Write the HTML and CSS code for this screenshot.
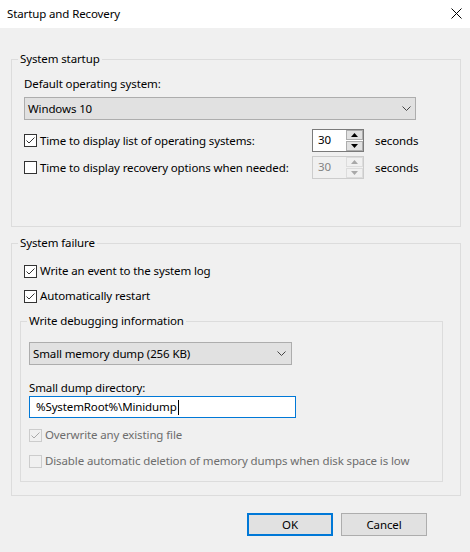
FILE: index.html
```html
<!DOCTYPE html>
<html>
<head>
<meta charset="utf-8">
<link rel="stylesheet" href="styles.css">
</head>
<body>
<div class="window">
  <div class="titlebar">
    <span class="title">Startup and Recovery</span>
    <svg class="close" width="11" height="11" viewBox="0 0 11 11"><path d="M0.5 0.5 L10.5 10.5 M10.5 0.5 L0.5 10.5" stroke="#000" stroke-width="1" fill="none"/></svg>
  </div>
  <div class="content">
    <fieldset class="group g1">
      <legend>System startup</legend>
      <div class="label">Default operating system:</div>
      <div class="combo combo-os">
        <span>Windows 10</span>
        <svg class="chev" width="9" height="5" viewBox="0 0 9 5"><path d="M0.5 0.5 L4.5 4.5 L8.5 0.5" stroke="#444" stroke-width="1" fill="none"/></svg>
      </div>
      <div class="spinrow first">
        <div class="check">
          <span class="box"><svg width="11" height="11" viewBox="0 0 11 11"><path d="M1.5 5.5 L4 8 L9.5 2.5" stroke="#333" stroke-width="1" fill="none"/></svg></span>
          <span>Time to display list of operating systems:</span>
        </div>
        <div class="spin">
          <span class="val">30</span>
          <div class="btns">
            <span class="sbtn"><svg width="7" height="4" viewBox="0 0 7 4"><path d="M0 4 L3.5 0 L7 4 Z" fill="#000"/></svg></span>
            <span class="sbtn"><svg width="7" height="4" viewBox="0 0 7 4"><path d="M0 0 L3.5 4 L7 0 Z" fill="#000"/></svg></span>
          </div>
        </div>
        <span class="unit">seconds</span>
      </div>
      <div class="spinrow second">
        <div class="check">
          <span class="box"></span>
          <span>Time to display recovery options when needed:</span>
        </div>
        <div class="spin disabled">
          <span class="val">30</span>
          <div class="btns">
            <span class="sbtn"><svg width="7" height="4" viewBox="0 0 7 4"><path d="M0 4 L3.5 0 L7 4 Z" fill="#a8a8a8"/></svg></span>
            <span class="sbtn"><svg width="7" height="4" viewBox="0 0 7 4"><path d="M0 0 L3.5 4 L7 0 Z" fill="#a8a8a8"/></svg></span>
          </div>
        </div>
        <span class="unit">seconds</span>
      </div>
    </fieldset>

    <fieldset class="group g2">
      <legend>System failure</legend>
      <div class="check row-event">
        <span class="box"><svg width="11" height="11" viewBox="0 0 11 11"><path d="M1.5 5.5 L4 8 L9.5 2.5" stroke="#333" stroke-width="1" fill="none"/></svg></span>
        <span>Write an event to the system log</span>
      </div>
      <div class="check row-restart">
        <span class="box"><svg width="11" height="11" viewBox="0 0 11 11"><path d="M1.5 5.5 L4 8 L9.5 2.5" stroke="#333" stroke-width="1" fill="none"/></svg></span>
        <span>Automatically restart</span>
      </div>
      <fieldset class="group g3">
        <legend>Write debugging information</legend>
        <div class="combo combo-dump">
          <span>Small memory dump (256 KB)</span>
          <svg class="chev" width="9" height="5" viewBox="0 0 9 5"><path d="M0.5 0.5 L4.5 4.5 L8.5 0.5" stroke="#444" stroke-width="1" fill="none"/></svg>
        </div>
        <div class="label dirlabel">Small dump directory:</div>
        <div class="textbox"><span>%SystemRoot%\Minidump</span><span class="caret"></span></div>
        <div class="check disabled row-over">
          <span class="box"><svg width="11" height="11" viewBox="0 0 11 11"><path d="M1.5 5.5 L4 8 L9.5 2.5" stroke="#a8a8a8" stroke-width="1" fill="none"/></svg></span>
          <span>Overwrite any existing file</span>
        </div>
        <div class="check disabled row-disable">
          <span class="box"></span>
          <span>Disable automatic deletion of memory dumps when disk space is low</span>
        </div>
      </fieldset>
    </fieldset>

    <div class="buttons">
      <span class="btn default">OK</span>
      <span class="btn">Cancel</span>
    </div>
  </div>
</div>
</body>
</html>
```

FILE: styles.css
```css
* { box-sizing: border-box; }
html, body { margin: 0; padding: 0; }
body {
  width: 470px;
  height: 552px;
  background: #f0f0f0;
  font-family: "Noto Sans", "Open Sans", sans-serif;
  font-size: 11.5px;
  letter-spacing: -0.12px;
  line-height: 16px;
  color: #000;
  overflow: hidden;
}
.titlebar {
  height: 28px;
  background: #fff;
  display: flex;
  align-items: center;
  justify-content: space-between;
  padding: 0 7px 0 7px;
}
.close { margin-right: 1px; margin-top: -1px; }

.content { padding: 0 9px 0 11px; }

.group {
  margin: 0;
  border: 1px solid #dcdcdc;
  min-width: 0;
}
.group legend {
  padding: 0 2px;
  line-height: 16px;
}
.g1 {
  margin-top: 23px;
  padding: 9px 11px 47px 12px;
}
.g1 legend { margin-left: -6px; }

.label { height: 16px; }
.combo {
  height: 23px;
  border: 1px solid #adadad;
  background: #e1e1e1;
  display: flex;
  align-items: center;
  justify-content: space-between;
  padding: 0 4px 0 3px;
}
.combo-os { width: 392px; margin-top: 5px; padding-right: 4px; }
.combo-dump { width: 263px; padding-right: 5px; }
.chev { display: block; }

.check {
  display: flex;
  align-items: center;
  height: 16px;
  white-space: nowrap;
}
.box {
  width: 13px;
  height: 13px;
  border: 1px solid #333;
  background: #fff;
  margin-right: 3px;
  flex: none;
  display: flex;
  align-items: center;
  justify-content: center;
}
.box svg { display: block; }
.check.disabled { color: #6d6d6d; }
.check.disabled .box { border-color: #cccccc; background: #f0f0f0; }

.spinrow {
  display: flex;
  align-items: center;
  height: 23px;
}
.spinrow.first { margin-top: 9px; }
.spinrow.second { margin-top: 4px; }
.spinrow .check { width: 288px; }
.spin {
  width: 52px;
  height: 23px;
  border: 1px solid #7a7a7a;
  background: #fff;
  display: flex;
}
.spin .val { flex: 1; padding-left: 5px; line-height: 20px; }
.btns {
  width: 17px;
  display: flex;
  flex-direction: column;
  gap: 1px;
  padding: 0;
}
.sbtn {
  flex: 1;
  border: 1px solid #adadad;
  background: #e1e1e1;
  display: flex;
  align-items: center;
  justify-content: center;
}
.sbtn svg { display: block; }
.spin.disabled { border-color: #cccccc; background: #f0f0f0; color: #838383; }
.spin.disabled .sbtn { border-color: #dcdcdc; background: #f0f0f0; }
.unit { margin-left: 11px; }

.g2 {
  margin-top: 8px;
  padding: 12px 0 13px 8px;
}
.g2 legend { margin-left: -2px; }
.g2 > .check { margin-left: 4px; }
.row-restart { margin-top: 9px; }

.g3 {
  margin-top: 9px;
  width: 423px;
  padding: 13px 0 12px 8px;
}
.g3 legend { margin-left: -2px; }
.dirlabel { margin-top: 15px; }
.textbox {
  width: 267px;
  height: 22px;
  border: 1px solid #0078d7;
  background: #fff;
  display: flex;
  align-items: center;
  padding-left: 6px;
}
.caret {
  width: 1px;
  height: 15px;
  background: #000;
  margin-left: 1px;
}
.row-over { margin-top: 9px; }
.row-disable { margin-top: 10px; }

.buttons {
  display: flex;
  justify-content: flex-end;
  gap: 8px;
  margin-top: 17px;
  padding-right: 34px;
}
.btn {
  width: 86px;
  height: 23px;
  border: 1px solid #adadad;
  background: #e1e1e1;
  display: flex;
  align-items: center;
  justify-content: center;
}
.btn.default { border: 2px solid #0078d7; }
```
